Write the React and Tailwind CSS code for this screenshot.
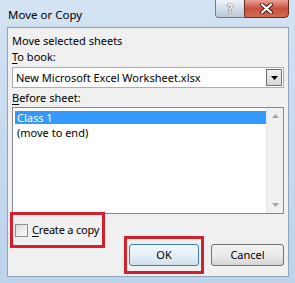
export default function App() {
  const font = { fontFamily: '"Noto Sans", "Liberation Sans", sans-serif' };
  return (
    <div
      className="w-[295px] h-[283px] overflow-hidden flex flex-col bg-gradient-to-b from-[#d3e3f3] via-[#c6daef] to-[#bcd3ea] text-black"
      style={font}
    >
      {/* Title bar */}
      <div className="h-[27px] flex items-start shrink-0">
        <div className="pl-[8px] pt-[7px] text-[11.5px] leading-[15px] text-black">Move or Copy</div>
        <div className="ml-auto mr-[6px] flex">
          <div className="w-[29px] h-[19px] -mt-[1px] rounded-bl-[4px] border border-[#6d7f95] border-r-0 bg-gradient-to-b from-[#eef3f8] via-[#d3dde8] to-[#b9c8d8] flex items-center justify-center">
            <span className="text-[13px] leading-none font-bold text-white" style={{ textShadow: '0 0 1px #333, 0 0 1px #333' }}>?</span>
          </div>
          <div className="w-[45px] h-[19px] -mt-[1px] rounded-br-[4px] border border-[#6b2a24] bg-gradient-to-b from-[#e8a193] via-[#c9503f] to-[#d06b52] flex items-center justify-center">
            <svg width="13" height="11" viewBox="0 0 13 11">
              <path d="M2 1.5 L11 9.5 M11 1.5 L2 9.5" stroke="#3a1a16" strokeWidth="4" strokeLinecap="round" />
              <path d="M2 1.5 L11 9.5 M11 1.5 L2 9.5" stroke="#ffffff" strokeWidth="2.2" strokeLinecap="round" />
            </svg>
          </div>
        </div>
      </div>

      {/* Client area */}
      <div className="mx-[6px] ml-[7px] mb-[6px] flex-1 bg-[#f0f0f0] border border-[#8ea4bd] flex flex-col px-[4px] text-[11px] leading-[16px]">
        <div className="mt-[5px]">Move selected sheets</div>
        <div><span className="underline underline-offset-2">T</span>o book:</div>
        {/* Combo box */}
        <div className="mt-[2px] h-[21px] bg-white border border-[#abadb3] flex items-center pl-[3px] pr-[1px]">
          <span className="flex-1">New Microsoft Excel Worksheet.xlsx</span>
          <div className="w-[16px] h-[17px] border border-[#707070] bg-gradient-to-b from-[#f2f2f2] to-[#d6d6d6] flex items-center justify-center">
            <svg width="7" height="4" viewBox="0 0 7 4"><path d="M0 0 H7 L3.5 4 Z" fill="#000" /></svg>
          </div>
        </div>
        <div className="mt-[2px]"><span className="underline underline-offset-2">B</span>efore sheet:</div>
        {/* List box */}
        <div className="mt-[1px] h-[107px] bg-white border border-[#828790] flex">
          <div className="flex-1 pl-[2px] pt-[3px] flex flex-col">
            <div className="h-[13px] bg-[#3399ff] text-white leading-[13px] pl-[2px]">Class 1</div>
            <div className="h-[13px] leading-[13px] pl-[2px] mt-[2px]">(move to end)</div>
          </div>
          <div className="w-[17px] bg-[#f0f0f0] border-l border-[#e8e8e8] flex flex-col justify-between items-center py-[6px]">
            <svg width="7" height="4" viewBox="0 0 7 4"><path d="M0 4 H7 L3.5 0 Z" fill="#a3a3a3" /></svg>
            <svg width="7" height="4" viewBox="0 0 7 4"><path d="M0 0 H7 L3.5 4 Z" fill="#a3a3a3" /></svg>
          </div>
        </div>
        {/* Bottom */}
        <div className="flex-1 flex">
          <div className="self-start -ml-[2px] -mt-[2px] w-[95px] h-[36px] border-[3px] border-[#d3202e] flex items-center pl-[2px] whitespace-nowrap">
            <div className="w-[13px] h-[13px] shrink-0 border border-[#8f8f8f] bg-gradient-to-br from-[#dcdcdc] to-[#fbfbfb] mr-[4px]" />
            <span className="tracking-[-0.2px]"><span className="underline underline-offset-2">C</span>reate a copy</span>
          </div>
          <div className="ml-auto self-end flex items-center mb-[2px]">
            <div className="w-[80px] h-[38px] border-[3px] border-[#d3202e] flex items-center justify-center">
              <div className="w-[70px] h-[22px] rounded-[3px] border border-[#3c7fb1] bg-gradient-to-b from-[#f2f8fc] via-[#e5eff8] to-[#cfe2f0] flex items-center justify-center">
                OK
              </div>
            </div>
            <div className="ml-[7px] w-[73px] h-[22px] rounded-[3px] border border-[#707070] bg-gradient-to-b from-[#f2f2f2] via-[#ebebeb] to-[#d5d5d5] flex items-center justify-center">
              Cancel
            </div>
          </div>
        </div>
      </div>
    </div>
  );
}
